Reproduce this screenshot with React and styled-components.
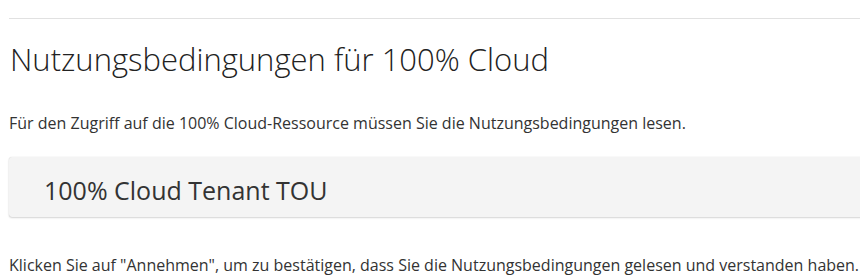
import React from "react";
import styled, { createGlobalStyle } from "styled-components";

const Global = createGlobalStyle`
  html, body { margin: 0; padding: 0; background: #fff; }
  body { font-family: "Open Sans", "Noto Sans", sans-serif; color: #333; overflow: hidden; }
`;

const Page = styled.div`
  padding: 18px 0 0 9px;
  width: 900px;
`;

const Rule = styled.hr`
  margin: 0;
  border: 0;
  border-top: 1px solid #e1e1e1;
`;

const Title = styled.h1`
  margin: 20px 0 0 1px;
  font-family: "Open Sans", sans-serif;
  font-weight: 300;
  font-size: 31px;
  line-height: 40px;
  color: #222;
`;

const Text = styled.p`
  margin: ${(p) => p.$mt}px 0 0 0;
  font-size: 16px;
  line-height: 20px;
  color: #333;
  white-space: nowrap;
`;

const Card = styled.div`
  margin-top: 24px;
  height: 60px;
  background: #f4f4f4;
  border-radius: 3px;
  box-shadow: 0 0 1px rgba(0, 0, 0, 0.18), 0 1px 2px rgba(0, 0, 0, 0.16);
  padding: 18px 0 0 35px;
  box-sizing: border-box;
`;

const CardTitle = styled.h2`
  margin: 0;
  font-weight: 400;
  font-size: 25px;
  line-height: 30px;
  color: #333;
`;

export default function App() {
  return (
    <>
      <Global />
      <Page>
        <Rule />
        <Title>Nutzungsbedingungen für 100% Cloud</Title>
        <Text $mt={34}>Für den Zugriff auf die 100% Cloud-Ressource müssen Sie die Nutzungsbedingungen lesen.</Text>
        <Card>
          <CardTitle>100% Cloud Tenant TOU</CardTitle>
        </Card>
        <Text $mt={38}>Klicken Sie auf "Annehmen", um zu bestätigen, dass Sie die Nutzungsbedingungen gelesen und verstanden haben.</Text>
      </Page>
    </>
  );
}
